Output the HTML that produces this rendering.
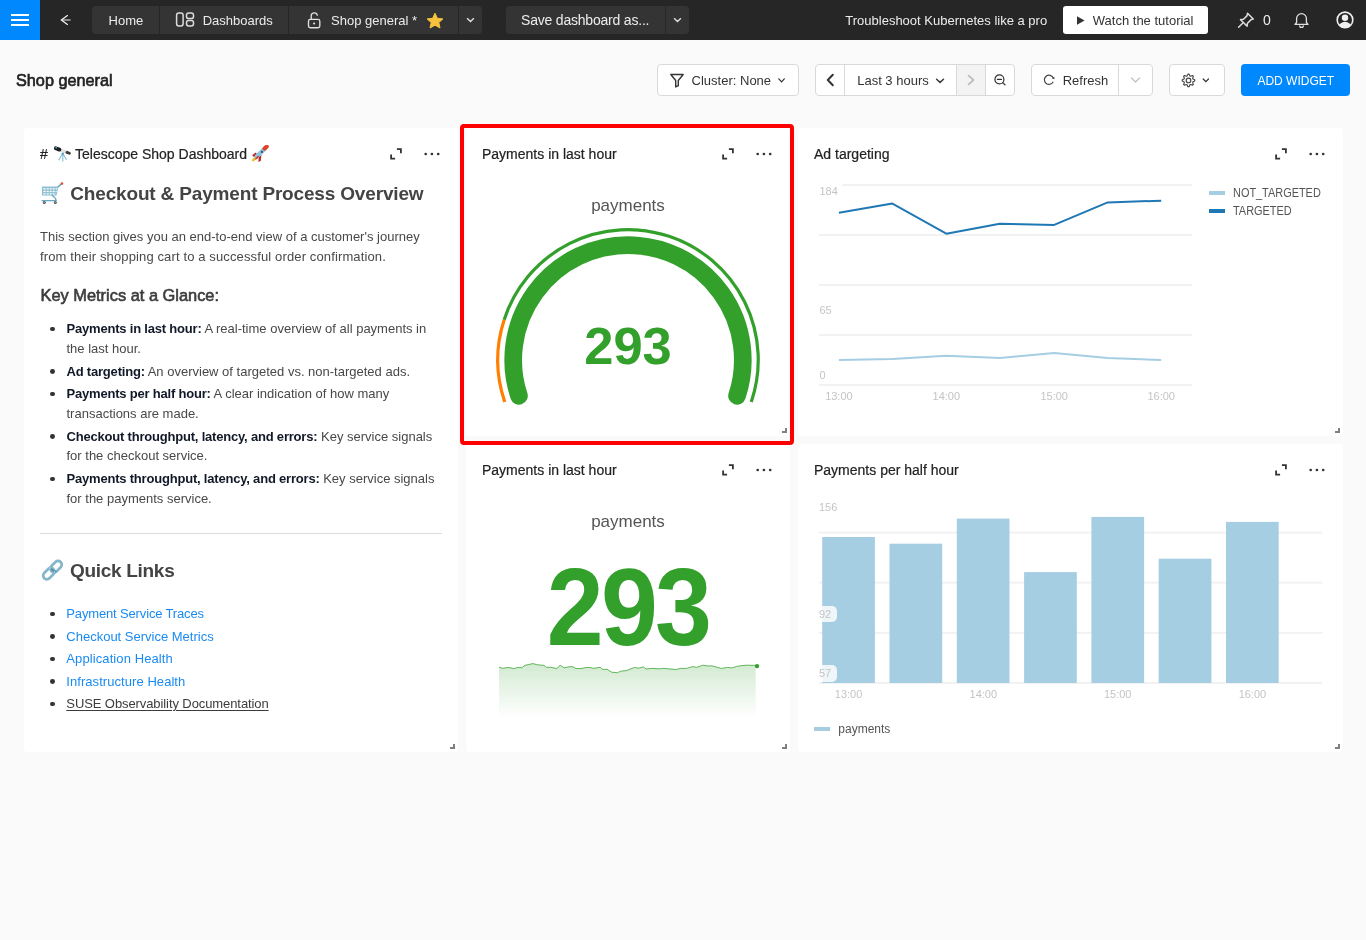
<!DOCTYPE html>
<html><head><meta charset="utf-8"><title>Shop general</title>
<style>
html,body{margin:0;padding:0;}
body{width:1366px;height:940px;overflow:hidden;background:#fafafa;position:relative;font-family:"Liberation Sans", sans-serif;}
.t{position:absolute;white-space:nowrap;}
.b{position:absolute;}
#root{position:absolute;left:0;top:0;width:1366px;height:940px;will-change:transform;}
b{font-weight:700;}
</style></head><body>
<div id="root">
<div class="b" style="left:0px;top:0px;width:1366px;height:40px;background:#262626;"></div>
<div class="b" style="left:0px;top:0px;width:40px;height:40px;background:#0088ff;"></div>
<div class="b" style="left:11px;top:14px;width:18px;height:2px;background:#fff;"></div>
<div class="b" style="left:11px;top:19px;width:18px;height:2px;background:#fff;"></div>
<div class="b" style="left:11px;top:24px;width:18px;height:2px;background:#fff;"></div>
<svg class="b" style="left:58px;top:12px" width="16" height="16" viewBox="0 0 16 16"><path d="M4 8H12.6" stroke="#aaaaaa" stroke-width="1.5"/><path d="M9.4 3.6L3.4 8L9.4 12.4" fill="none" stroke="#f0f0f0" stroke-width="1.3" stroke-linecap="round" stroke-linejoin="miter"/></svg>
<div class="b" style="left:92px;top:6px;width:390px;height:28px;background:#343434;border-radius:4px;"></div>
<div class="b" style="left:159px;top:6px;width:1px;height:28px;background:#262626;"></div>
<div class="b" style="left:288px;top:6px;width:1px;height:28px;background:#262626;"></div>
<div class="b" style="left:458px;top:6px;width:1px;height:28px;background:#262626;"></div>
<div class="t" style="left:108.6px;top:14.00px;font-size:13px;line-height:13px;color:#ececec;font-weight:400;">Home</div>
<svg class="b" style="left:175px;top:12px" width="20" height="15" viewBox="0 0 20 15"><rect x="1.6" y="1" width="6.5" height="13" rx="2.2" fill="none" stroke="#dcdcdc" stroke-width="1.5"/><rect x="11.5" y="1" width="7" height="5.6" rx="2.2" fill="none" stroke="#dcdcdc" stroke-width="1.5"/><rect x="11.5" y="8.4" width="7" height="5.6" rx="2.2" fill="none" stroke="#dcdcdc" stroke-width="1.5"/></svg>
<div class="t" style="left:202.7px;top:14.00px;font-size:13px;line-height:13px;color:#ececec;font-weight:400;">Dashboards</div>
<svg class="b" style="left:305px;top:11px" width="17" height="18" viewBox="0 0 17 18"><path d="M6.2 8.4V5.1a3.1 3.1 0 0 1 6.1-0.9" fill="none" stroke="#e0e0e0" stroke-width="1.35" stroke-linecap="round"/><rect x="3.5" y="8.4" width="11.3" height="8.3" rx="1.8" fill="none" stroke="#e0e0e0" stroke-width="1.35"/><circle cx="9.1" cy="12.5" r="1.1" fill="#e0e0e0"/></svg>
<div class="t" style="left:331px;top:14.00px;font-size:13px;line-height:13px;color:#ececec;font-weight:400;">Shop general *</div>
<svg class="b" style="left:426px;top:12px" width="18" height="17" viewBox="0 0 18 17"><path d="M9 1.2l2.4 5.1 5.5.6-4.1 3.7 1.2 5.4L9 13.2 4 16l1.2-5.4L1.1 6.9l5.5-.6z" fill="#f7c23e" stroke="#f7c23e" stroke-width="1" stroke-linejoin="round"/></svg>
<svg class="b" style="left:465px;top:16px" width="11" height="8" viewBox="0 0 11 8"><path d="M2.4 2.6L5.5 5.6L8.6 2.6" fill="none" stroke="#e0e0e0" stroke-width="1.35" stroke-linecap="round"/></svg>
<div class="b" style="left:506px;top:6px;width:183px;height:28px;background:#343434;border-radius:4px;"></div>
<div class="b" style="left:665px;top:6px;width:1px;height:28px;background:#262626;"></div>
<div class="t" style="left:521px;top:13.35px;font-size:14px;line-height:14px;color:#ececec;font-weight:400;letter-spacing:-0.2px;">Save dashboard as...</div>
<svg class="b" style="left:672px;top:16px" width="11" height="8" viewBox="0 0 11 8"><path d="M2.4 2.6L5.5 5.6L8.6 2.6" fill="none" stroke="#e0e0e0" stroke-width="1.35" stroke-linecap="round"/></svg>
<div class="t" style="left:845.3px;top:14.00px;font-size:13px;line-height:13px;color:#ececec;font-weight:400;">Troubleshoot Kubernetes like a pro</div>
<div class="b" style="left:1063px;top:6px;width:145px;height:28px;background:#fff;border-radius:3px;"></div>
<svg class="b" style="left:1075px;top:15px" width="11" height="11" viewBox="0 0 11 11"><path d="M2 1.2L9.6 5.5L2 9.8z" fill="#333"/></svg>
<div class="t" style="left:1092.8px;top:14.00px;font-size:13px;line-height:13px;color:#333;font-weight:400;">Watch the tutorial</div>
<svg class="b" style="left:1236px;top:11px" width="20" height="18" viewBox="0 0 20 18"><path d="M11.5 2.2l5.8 5.8-2.2.6-3.6 3.6-.4 3-6.6-6.6 3-.4 3.6-3.6z" fill="none" stroke="#dcdcdc" stroke-width="1.5" stroke-linejoin="round"/><path d="M6.6 12.2L2.6 16.2" stroke="#dcdcdc" stroke-width="1.5" stroke-linecap="round"/></svg>
<div class="t" style="left:1263px;top:13.15px;font-size:14px;line-height:14px;color:#ececec;font-weight:400;">0</div>
<svg class="b" style="left:1293px;top:11px" width="17" height="18" viewBox="0 0 17 18"><path d="M2 13.4h13l-1.6-1.9V7.6a4.9 4.9 0 0 0-9.8 0v3.9z" fill="none" stroke="#e0e0e0" stroke-width="1.3" stroke-linejoin="round"/><path d="M6.6 14.4a1.9 1.9 0 0 0 3.8 0" fill="none" stroke="#e0e0e0" stroke-width="1.3"/></svg>
<svg class="b" style="left:1335px;top:11px" width="20" height="20" viewBox="0 0 20 20"><defs><clipPath id="uc"><circle cx="10" cy="8.9" r="7.6"/></clipPath></defs><circle cx="10" cy="8.9" r="7.8" fill="none" stroke="#f0f0f0" stroke-width="1.6"/><circle cx="10" cy="6.7" r="3.2" fill="#f0f0f0"/><ellipse cx="10" cy="16.2" rx="6.4" ry="5.4" fill="#f0f0f0" clip-path="url(#uc)"/></svg>
<div class="t" style="left:16px;top:71.61px;font-size:17px;line-height:17px;color:#222;font-weight:400;-webkit-text-stroke:0.65px #222;transform:scaleX(0.955);transform-origin:0 0;">Shop general</div>
<div class="b" style="left:657px;top:64px;width:142px;height:32px;background:#fff;border:1px solid #d9d9d9;border-radius:4px;box-sizing:border-box;"></div>
<svg class="b" style="left:669px;top:73px" width="16" height="15" viewBox="0 0 16 15"><path d="M1.8 1.5h12.4L9.3 7.5v5.2L6.7 13.9V7.5z" fill="none" stroke="#333" stroke-width="1.4" stroke-linejoin="round"/></svg>
<div class="t" style="left:691.6px;top:74.20px;font-size:13px;line-height:13px;color:#333;font-weight:400;">Cluster: None</div>
<svg class="b" style="left:777px;top:76px" width="10" height="8" viewBox="0 0 10 8"><path d="M1.8 2.8L4.55 5.8L7.3 2.8" fill="none" stroke="#333" stroke-width="1.2" stroke-linecap="round"/></svg>
<div class="b" style="left:815px;top:64px;width:200px;height:32px;background:#fff;border:1px solid #d9d9d9;border-radius:4px;box-sizing:border-box;"></div>
<div class="b" style="left:956px;top:65px;width:29px;height:30px;background:#f3f3f3;"></div>
<div class="b" style="left:844px;top:64px;width:1px;height:32px;background:#d9d9d9;"></div>
<div class="b" style="left:956px;top:64px;width:1px;height:32px;background:#d9d9d9;"></div>
<div class="b" style="left:985px;top:64px;width:1px;height:32px;background:#d9d9d9;"></div>
<svg class="b" style="left:824px;top:73px" width="12" height="14" viewBox="0 0 12 14"><path d="M8.8 1.8L3.8 7L8.8 12.2" fill="none" stroke="#333" stroke-width="2" stroke-linecap="round" stroke-linejoin="round"/></svg>
<div class="t" style="left:857.2px;top:74.20px;font-size:13px;line-height:13px;color:#333;font-weight:400;">Last 3 hours</div>
<svg class="b" style="left:935px;top:76px" width="10" height="8" viewBox="0 0 10 8"><path d="M1.6 3.2L5.05 6.4L8.5 3.2" fill="none" stroke="#3a3a3a" stroke-width="1.5" stroke-linecap="round"/></svg>
<svg class="b" style="left:965px;top:73px" width="12" height="14" viewBox="0 0 12 14"><path d="M3.6 2.6L8.4 7L3.6 11.4" fill="none" stroke="#bdbdbd" stroke-width="1.8" stroke-linecap="round" stroke-linejoin="round"/></svg>
<svg class="b" style="left:992px;top:73px" width="15" height="15" viewBox="0 0 15 15"><circle cx="7.4" cy="6.4" r="4.5" fill="none" stroke="#333" stroke-width="1.2"/><path d="M5.4 6.4h4.1M10.6 9.6l2.4 2.2" stroke="#333" stroke-width="1.2" stroke-linecap="round"/></svg>
<div class="b" style="left:1031px;top:64px;width:122px;height:32px;background:#fff;border:1px solid #d9d9d9;border-radius:4px;box-sizing:border-box;"></div>
<div class="b" style="left:1118px;top:64px;width:1px;height:32px;background:#d9d9d9;"></div>
<svg class="b" style="left:1042px;top:74px" width="14" height="13" viewBox="0 0 14 13"><path d="M11.17 3.86A4.6 4.6 0 1 0 11.17 7.74" fill="none" stroke="#444" stroke-width="1.2"/><path d="M12.3 2.4L12.4 5.2 9.9 4.6z" fill="#444"/></svg>
<div class="t" style="left:1062.7px;top:74.20px;font-size:13px;line-height:13px;color:#333;font-weight:400;">Refresh</div>
<svg class="b" style="left:1130px;top:76px" width="11" height="8" viewBox="0 0 11 8"><path d="M1.5 2L5.5 6L9.5 2" fill="none" stroke="#c4c4c4" stroke-width="1.3" stroke-linecap="round"/></svg>
<div class="b" style="left:1169px;top:64px;width:56px;height:32px;background:#fff;border:1px solid #d9d9d9;border-radius:4px;box-sizing:border-box;"></div>
<svg class="b" style="left:1181px;top:73px" width="15" height="15" viewBox="0 0 15 15"><path d="M6.14 2.90 L6.88 1.13 L8.12 1.13 L8.86 2.90 L9.72 3.25 L11.50 2.53 L12.37 3.40 L11.65 5.18 L12.00 6.04 L13.77 6.78 L13.77 8.02 L12.00 8.76 L11.65 9.62 L12.37 11.40 L11.50 12.27 L9.72 11.55 L8.86 11.90 L8.12 13.67 L6.88 13.67 L6.14 11.90 L5.28 11.55 L3.50 12.27 L2.63 11.40 L3.35 9.62 L3.00 8.76 L1.23 8.02 L1.23 6.78 L3.00 6.04 L3.35 5.18 L2.63 3.40 L3.50 2.53 L5.28 3.25Z" fill="none" stroke="#444" stroke-width="1.15" stroke-linejoin="round"/><circle cx="7.5" cy="7.4" r="2.3" fill="none" stroke="#444" stroke-width="1.15"/></svg>
<svg class="b" style="left:1201px;top:76px" width="10" height="8" viewBox="0 0 10 8"><path d="M2.2 3L4.85 5.7L7.5 3" fill="none" stroke="#333" stroke-width="1.2" stroke-linecap="round"/></svg>
<div class="b" style="left:1241px;top:64px;width:109px;height:32px;background:#0088ff;border-radius:4px;"></div>
<div class="t" style="left:1257.4px;top:74.84px;font-size:12px;line-height:12px;color:#fff;font-weight:400;">ADD WIDGET</div>
<div class="b" style="left:24px;top:128px;width:434px;height:624px;background:#fff;border-radius:4px;"></div>
<svg class="b" style="left:450px;top:744px" width="5" height="5" viewBox="0 0 5 5"><path d="M4 0V4H0" fill="none" stroke="#808080" stroke-width="2"/></svg>
<svg class="b" style="left:390px;top:147px" width="13" height="14" viewBox="0 0 13 14"><path d="M6.9 2.2h4v4" fill="none" stroke="#333" stroke-width="1.8"/><path d="M1.1 7.6v4h4" fill="none" stroke="#333" stroke-width="1.8"/></svg>
<svg class="b" style="left:418px;top:150.9px" width="40" height="6" viewBox="0 0 40 6"><circle cx="7.7" cy="3" r="1.35" fill="#333"/><circle cx="13.9" cy="3" r="1.35" fill="#333"/><circle cx="20.2" cy="3" r="1.35" fill="#333"/></svg>
<div class="b" style="left:466px;top:128px;width:324px;height:308px;background:#fff;border-radius:4px;"></div>
<svg class="b" style="left:782px;top:428px" width="5" height="5" viewBox="0 0 5 5"><path d="M4 0V4H0" fill="none" stroke="#808080" stroke-width="2"/></svg>
<svg class="b" style="left:722px;top:147px" width="13" height="14" viewBox="0 0 13 14"><path d="M6.9 2.2h4v4" fill="none" stroke="#333" stroke-width="1.8"/><path d="M1.1 7.6v4h4" fill="none" stroke="#333" stroke-width="1.8"/></svg>
<svg class="b" style="left:750px;top:150.9px" width="40" height="6" viewBox="0 0 40 6"><circle cx="7.7" cy="3" r="1.35" fill="#333"/><circle cx="13.9" cy="3" r="1.35" fill="#333"/><circle cx="20.2" cy="3" r="1.35" fill="#333"/></svg>
<div class="b" style="left:798px;top:128px;width:545px;height:308px;background:#fff;border-radius:4px;"></div>
<svg class="b" style="left:1335px;top:428px" width="5" height="5" viewBox="0 0 5 5"><path d="M4 0V4H0" fill="none" stroke="#808080" stroke-width="2"/></svg>
<svg class="b" style="left:1275px;top:147px" width="13" height="14" viewBox="0 0 13 14"><path d="M6.9 2.2h4v4" fill="none" stroke="#333" stroke-width="1.8"/><path d="M1.1 7.6v4h4" fill="none" stroke="#333" stroke-width="1.8"/></svg>
<svg class="b" style="left:1303px;top:150.9px" width="40" height="6" viewBox="0 0 40 6"><circle cx="7.7" cy="3" r="1.35" fill="#333"/><circle cx="13.9" cy="3" r="1.35" fill="#333"/><circle cx="20.2" cy="3" r="1.35" fill="#333"/></svg>
<div class="b" style="left:466px;top:444px;width:324px;height:308px;background:#fff;border-radius:4px;"></div>
<svg class="b" style="left:782px;top:744px" width="5" height="5" viewBox="0 0 5 5"><path d="M4 0V4H0" fill="none" stroke="#808080" stroke-width="2"/></svg>
<svg class="b" style="left:722px;top:463px" width="13" height="14" viewBox="0 0 13 14"><path d="M6.9 2.2h4v4" fill="none" stroke="#333" stroke-width="1.8"/><path d="M1.1 7.6v4h4" fill="none" stroke="#333" stroke-width="1.8"/></svg>
<svg class="b" style="left:750px;top:466.9px" width="40" height="6" viewBox="0 0 40 6"><circle cx="7.7" cy="3" r="1.35" fill="#333"/><circle cx="13.9" cy="3" r="1.35" fill="#333"/><circle cx="20.2" cy="3" r="1.35" fill="#333"/></svg>
<div class="b" style="left:798px;top:444px;width:545px;height:308px;background:#fff;border-radius:4px;"></div>
<svg class="b" style="left:1335px;top:744px" width="5" height="5" viewBox="0 0 5 5"><path d="M4 0V4H0" fill="none" stroke="#808080" stroke-width="2"/></svg>
<svg class="b" style="left:1275px;top:463px" width="13" height="14" viewBox="0 0 13 14"><path d="M6.9 2.2h4v4" fill="none" stroke="#333" stroke-width="1.8"/><path d="M1.1 7.6v4h4" fill="none" stroke="#333" stroke-width="1.8"/></svg>
<svg class="b" style="left:1303px;top:466.9px" width="40" height="6" viewBox="0 0 40 6"><circle cx="7.7" cy="3" r="1.35" fill="#333"/><circle cx="13.9" cy="3" r="1.35" fill="#333"/><circle cx="20.2" cy="3" r="1.35" fill="#333"/></svg>
<div class="t" style="left:40px;top:147.15px;font-size:14px;line-height:14px;color:#222;font-weight:400;-webkit-text-stroke:0.2px #222;">#</div>
<div class="t" style="left:75px;top:147.15px;font-size:14px;line-height:14px;color:#222;font-weight:400;-webkit-text-stroke:0.2px #222;">Telescope Shop Dashboard</div>
<div class="t" style="left:482px;top:147.15px;font-size:14px;line-height:14px;color:#222;font-weight:400;-webkit-text-stroke:0.2px #222;">Payments in last hour</div>
<div class="t" style="left:814px;top:147.15px;font-size:14px;line-height:14px;color:#222;font-weight:400;-webkit-text-stroke:0.2px #222;">Ad targeting</div>
<div class="t" style="left:482px;top:463.15px;font-size:14px;line-height:14px;color:#222;font-weight:400;-webkit-text-stroke:0.2px #222;">Payments in last hour</div>
<div class="t" style="left:814px;top:463.15px;font-size:14px;line-height:14px;color:#222;font-weight:400;-webkit-text-stroke:0.2px #222;">Payments per half hour</div>
<svg class="b" style="left:54px;top:145px" width="17" height="18" viewBox="0 0 17 18"><path d="M5.2 4.5L13 7.4" stroke="#e2e2e2" stroke-width="3.3" stroke-linecap="round"/><path d="M1.8 3.3L5.4 4.6" stroke="#1e1e1e" stroke-width="3.8" stroke-linecap="round"/><path d="M13 7.4L15.4 8.3" stroke="#3a3a3a" stroke-width="2.8" stroke-linecap="round"/><circle cx="2.2" cy="2.7" r="0.9" fill="#4aa8d8"/><path d="M8.8 8.2L4.6 15.3M8.8 8.2V16.6M8.8 8.2L12.5 14.8" stroke="#86bfd8" stroke-width="1.1" fill="none"/><circle cx="8.8" cy="8.6" r="1.2" fill="#5d9fbd"/></svg>
<svg class="b" style="left:251px;top:145px" width="18" height="18" viewBox="0 0 18 18"><path d="M1.2 10.3L4.6 7.5 6.8 9.8 3.2 12.2z" fill="#c81e1e"/><path d="M7.8 11.6L10.4 9.8 9.8 15.8 7.4 17z" fill="#c81e1e"/><path d="M2.2 15.2L5.2 12" stroke="#f5c030" stroke-width="2.6" stroke-linecap="round"/><path d="M5.6 11.6L14.2 3.2" stroke="#8fc3d9" stroke-width="4.4" stroke-linecap="round"/><path d="M13.6 3.6L15.8 1.6" stroke="#e04428" stroke-width="4" stroke-linecap="round"/><circle cx="10.9" cy="6.9" r="1.05" fill="#3a4a5a"/><path d="M4.4 14.4L7.6 11.2" stroke="#d42a1e" stroke-width="1.3"/></svg>
<div class="t" style="left:70.3px;top:184.22px;font-size:19px;line-height:19px;color:#444;font-weight:700;letter-spacing:-0.17px;">Checkout &amp; Payment Process Overview</div>
<svg class="b" style="left:36px;top:176px" width="34" height="34" viewBox="0 0 34 34"><path d="M6 10.6H22.4L20.6 19.6H6z" fill="#8dbfd2"/><g fill="#fff"><rect x="7.4" y="12.2" width="13.6" height="1.3"/><rect x="7.4" y="14.8" width="13.2" height="1.3"/><rect x="7.4" y="17.3" width="12.7" height="1.2"/></g><g stroke="#8dbfd2" stroke-width="1"><path d="M10.2 11v8.4M13.2 11v8.4M16.2 11v8.4M19.2 11v8.4"/></g><path d="M22.4 10.6L26 7.4" stroke="#6aa6bd" stroke-width="1.5" stroke-linecap="round"/><circle cx="26" cy="7.6" r="1.3" fill="#e05a3a"/><path d="M16.2 19.6c1.5 1 3.4 2.2 3.6 3.4v1.6M6 24.6H20.3" fill="none" stroke="#6aa6bd" stroke-width="1.4" stroke-linecap="round"/><circle cx="8.3" cy="26.4" r="1.5" fill="#555"/><circle cx="19.3" cy="26.4" r="1.5" fill="#555"/><circle cx="8.3" cy="26.4" r="0.7" fill="#6aa6bd"/><circle cx="19.3" cy="26.4" r="0.7" fill="#6aa6bd"/></svg>
<div class="t" style="left:40px;top:230.00px;font-size:13px;line-height:13px;color:#484848;font-weight:400;">This section gives you an end-to-end view of a customer&#39;s journey</div>
<div class="t" style="left:40px;top:249.50px;font-size:13px;line-height:13px;color:#484848;font-weight:400;letter-spacing:0.13px;">from their shopping cart to a successful order confirmation.</div>
<div class="t" style="left:40.5px;top:287.12px;font-size:16.4px;line-height:16.4px;color:#3c3c3c;font-weight:400;-webkit-text-stroke:0.6px #3c3c3c;">Key Metrics at a Glance:</div>
<div class="b" style="left:50.2px;top:326.6px;width:4.8px;height:4.8px;border-radius:50%;background:#333"></div>
<div class="t" style="left:66.5px;top:322.00px;font-size:13px;line-height:13px;color:#484848"><b style="color:#111827;letter-spacing:-0.2px">Payments in last hour:</b> A real-time overview of all payments in</div>
<div class="t" style="left:66.5px;top:341.60px;font-size:13px;line-height:13px;color:#484848;font-weight:400;">the last hour.</div>
<div class="b" style="left:50.2px;top:369.1px;width:4.8px;height:4.8px;border-radius:50%;background:#333"></div>
<div class="t" style="left:66.5px;top:364.50px;font-size:13px;line-height:13px;color:#484848"><b style="color:#111827;letter-spacing:-0.2px">Ad targeting:</b> An overview of targeted vs. non-targeted ads.</div>
<div class="b" style="left:50.2px;top:391.6px;width:4.8px;height:4.8px;border-radius:50%;background:#333"></div>
<div class="t" style="left:66.5px;top:387.00px;font-size:13px;line-height:13px;color:#484848"><b style="color:#111827;letter-spacing:-0.2px">Payments per half hour:</b> A clear indication of how many</div>
<div class="t" style="left:66.5px;top:406.60px;font-size:13px;line-height:13px;color:#484848;font-weight:400;">transactions are made.</div>
<div class="b" style="left:50.2px;top:434.4px;width:4.8px;height:4.8px;border-radius:50%;background:#333"></div>
<div class="t" style="left:66.5px;top:429.80px;font-size:13px;line-height:13px;color:#484848"><b style="color:#111827;letter-spacing:-0.2px">Checkout throughput, latency, and errors:</b> Key service signals</div>
<div class="t" style="left:66.5px;top:449.40px;font-size:13px;line-height:13px;color:#484848;font-weight:400;">for the checkout service.</div>
<div class="b" style="left:50.2px;top:476.6px;width:4.8px;height:4.8px;border-radius:50%;background:#333"></div>
<div class="t" style="left:66.5px;top:472.00px;font-size:13px;line-height:13px;color:#484848"><b style="color:#111827;letter-spacing:-0.2px">Payments throughput, latency, and errors:</b> Key service signals</div>
<div class="t" style="left:66.5px;top:491.60px;font-size:13px;line-height:13px;color:#484848;font-weight:400;">for the payments service.</div>
<div class="b" style="left:40px;top:533px;width:402px;height:1px;background:#dcdcdc;"></div>
<svg class="b" style="left:36px;top:553px" width="34" height="34" viewBox="0 0 34 34"><g fill="none" stroke="#86b6c9" stroke-width="2.7"><rect x="6.3" y="16.9" width="13" height="7.4" rx="3.7" transform="rotate(-45 12.8 20.6)"/><rect x="13.6" y="9.9" width="13" height="7.4" rx="3.7" transform="rotate(-45 20.1 13.6)"/></g><path d="M15.2 15.6l2.4 2.6M18.6 17.4l1.6 1.8" stroke="#3f8199" stroke-width="1.4"/><path d="M13.3 13.7l0.8 2.6M18.5 19.7l0.5-2.2" stroke="#a8d8f0" stroke-width="0.9"/></svg>
<div class="t" style="left:70px;top:560.92px;font-size:19px;line-height:19px;color:#444;font-weight:700;letter-spacing:-0.3px;">Quick Links</div>
<div class="b" style="left:50.2px;top:611.6px;width:4.8px;height:4.8px;border-radius:50%;background:#333"></div>
<div class="t" style="left:66.3px;top:607.00px;font-size:13px;line-height:13px;color:#1a8af0;font-weight:400;letter-spacing:-0.15px;">Payment Service Traces</div>
<div class="b" style="left:50.2px;top:634.1px;width:4.8px;height:4.8px;border-radius:50%;background:#333"></div>
<div class="t" style="left:66.3px;top:629.50px;font-size:13px;line-height:13px;color:#1a8af0;font-weight:400;letter-spacing:0px;">Checkout Service Metrics</div>
<div class="b" style="left:50.2px;top:656.6px;width:4.8px;height:4.8px;border-radius:50%;background:#333"></div>
<div class="t" style="left:66.3px;top:652.00px;font-size:13px;line-height:13px;color:#1a8af0;font-weight:400;letter-spacing:0.1px;">Application Health</div>
<div class="b" style="left:50.2px;top:679.1px;width:4.8px;height:4.8px;border-radius:50%;background:#333"></div>
<div class="t" style="left:66.3px;top:674.50px;font-size:13px;line-height:13px;color:#1a8af0;font-weight:400;letter-spacing:0.06px;">Infrastructure Health</div>
<div class="b" style="left:50.2px;top:701.6px;width:4.8px;height:4.8px;border-radius:50%;background:#333"></div>
<div class="t" style="left:66.3px;top:697.00px;font-size:13px;line-height:13px;color:#3c3c3c;font-weight:400;letter-spacing:-0.09px;text-decoration:underline;text-underline-offset:2px;">SUSE Observability Documentation</div>
<svg class="b" style="left:0;top:0" width="1366" height="940"><path d="M518.94 395.86A114.8 114.8 0 1 1 737.06 395.86" fill="none" stroke="#33a02c" stroke-width="17.7" stroke-linecap="round"/><path d="M504.75 401.96A130.2 130.2 0 0 1 504.17 319.77" fill="none" stroke="#ff7f00" stroke-width="3.2"/><path d="M504.17 319.77A130.2 130.2 0 1 1 751.25 401.96" fill="none" stroke="#33a02c" stroke-width="3.2"/></svg>
<div class="t" style="left:466px;top:197.21px;font-size:17px;line-height:17px;color:#555;font-weight:400;width:324px;text-align:center;">payments</div>
<div class="t" style="left:466px;top:319.86px;font-size:52.5px;line-height:52.5px;color:#33a02c;font-weight:700;width:324px;text-align:center;">293</div>
<div class="t" style="left:466px;top:513.01px;font-size:17px;line-height:17px;color:#555;font-weight:400;width:324px;text-align:center;">payments</div>
<div class="t" style="left:466px;top:552.18px;font-size:110px;line-height:110px;color:#33a02c;font-weight:700;width:324px;text-align:center;letter-spacing:-3px;transform:scaleX(0.93);transform-origin:162px 0;">293</div>
<svg class="b" style="left:0;top:0" width="1366" height="940"><defs><linearGradient id="sg" x1="0" y1="0" x2="0" y2="1"><stop offset="0" stop-color="#33a02c" stop-opacity="0.22"/><stop offset="1" stop-color="#33a02c" stop-opacity="0"/></linearGradient></defs><path d="M499.0 667.3 L502.9 668.3 L506.9 667.6 L509.8 667.6 L513.8 668.6 L518.2 667.3 L521.7 667.8 L525.1 665.3 L529.6 664.3 L533.0 663.6 L536.5 664.6 L540.5 665.1 L543.9 665.3 L546.4 667.3 L550.3 667.3 L556.8 668.5 L560.2 665.3 L564.2 667.8 L568.1 667.0 L572.1 666.5 L576.0 668.5 L581.0 668.6 L585.9 667.5 L589.9 667.5 L593.8 668.3 L600.2 667.3 L602.7 669.3 L607.2 669.3 L611.6 672.2 L617.5 672.7 L620.5 671.2 L624.4 670.8 L625.0 671.0 L629.1 669.5 L634.7 667.4 L638.3 668.2 L643.4 666.9 L646.0 669.0 L651.6 668.4 L658.8 668.8 L663.9 668.4 L670.1 669.0 L676.2 669.5 L680.3 668.4 L686.5 668.4 L689.6 667.4 L693.2 666.6 L696.7 667.4 L702.9 665.2 L707.0 665.9 L712.1 665.9 L721.3 668.4 L727.5 667.4 L732.1 667.9 L736.7 666.4 L741.8 665.6 L747.0 665.2 L755.7 665.4 L755.7 717 L499.0 717 Z" fill="url(#sg)"/><path d="M499.0 667.3 L502.9 668.3 L506.9 667.6 L509.8 667.6 L513.8 668.6 L518.2 667.3 L521.7 667.8 L525.1 665.3 L529.6 664.3 L533.0 663.6 L536.5 664.6 L540.5 665.1 L543.9 665.3 L546.4 667.3 L550.3 667.3 L556.8 668.5 L560.2 665.3 L564.2 667.8 L568.1 667.0 L572.1 666.5 L576.0 668.5 L581.0 668.6 L585.9 667.5 L589.9 667.5 L593.8 668.3 L600.2 667.3 L602.7 669.3 L607.2 669.3 L611.6 672.2 L617.5 672.7 L620.5 671.2 L624.4 670.8 L625.0 671.0 L629.1 669.5 L634.7 667.4 L638.3 668.2 L643.4 666.9 L646.0 669.0 L651.6 668.4 L658.8 668.8 L663.9 668.4 L670.1 669.0 L676.2 669.5 L680.3 668.4 L686.5 668.4 L689.6 667.4 L693.2 666.6 L696.7 667.4 L702.9 665.2 L707.0 665.9 L712.1 665.9 L721.3 668.4 L727.5 667.4 L732.1 667.9 L736.7 666.4 L741.8 665.6 L747.0 665.2 L755.7 665.4" fill="none" stroke="#33a02c" stroke-opacity="0.75" stroke-width="1"/><circle cx="757.0" cy="666.1" r="2.2" fill="#33a02c"/></svg>
<svg class="b" style="left:0;top:0" width="1366" height="940"><rect x="819" y="184" width="373" height="2" fill="#f2f2f2"/><rect x="819" y="234" width="373" height="2" fill="#f2f2f2"/><rect x="819" y="284" width="373" height="2" fill="#f2f2f2"/><rect x="819" y="334" width="373" height="2" fill="#f2f2f2"/><rect x="819" y="384" width="373" height="2" fill="#f2f2f2"/><path d="M838.9 360 L892.4 359.1 L946.3 355.8 L999.8 357.9 L1054.2 352.9 L1107.7 357.9 L1161.2 360" fill="none" stroke="#a6cee3" stroke-width="2" stroke-linejoin="round"/><path d="M838.9 212.8 L892.4 203.6 L946.3 233.7 L999.8 223.7 L1054.2 224.9 L1107.7 202.4 L1161.2 200.7" fill="none" stroke="#1f78b4" stroke-width="2" stroke-linejoin="round"/><rect x="1209" y="191" width="16" height="4" fill="#a6cee3"/><rect x="1209" y="209" width="16" height="4" fill="#1f78b4"/></svg>
<div class="b" style="left:818px;top:183px;width:24px;height:14px;background:#fff;"></div>
<div class="t" style="left:819.5px;top:185.89px;font-size:11px;line-height:11px;color:#c4c4c4;font-weight:400;">184</div>
<div class="t" style="left:819.5px;top:304.89px;font-size:11px;line-height:11px;color:#c4c4c4;font-weight:400;">65</div>
<div class="t" style="left:819.5px;top:369.99px;font-size:11px;line-height:11px;color:#c4c4c4;font-weight:400;">0</div>
<div class="t" style="left:808.9px;top:391.19px;font-size:11px;line-height:11px;color:#c4c4c4;font-weight:400;width:60px;text-align:center;">13:00</div>
<div class="t" style="left:916.3px;top:391.19px;font-size:11px;line-height:11px;color:#c4c4c4;font-weight:400;width:60px;text-align:center;">14:00</div>
<div class="t" style="left:1024.2px;top:391.19px;font-size:11px;line-height:11px;color:#c4c4c4;font-weight:400;width:60px;text-align:center;">15:00</div>
<div class="t" style="left:1131.2px;top:391.19px;font-size:11px;line-height:11px;color:#c4c4c4;font-weight:400;width:60px;text-align:center;">16:00</div>
<div class="t" style="left:1233.4px;top:186.84px;font-size:12px;line-height:12px;color:#555;font-weight:400;transform:scaleX(0.91);transform-origin:0 0;">NOT_TARGETED</div>
<div class="t" style="left:1233.4px;top:204.84px;font-size:12px;line-height:12px;color:#555;font-weight:400;transform:scaleX(0.91);transform-origin:0 0;">TARGETED</div>
<svg class="b" style="left:0;top:0" width="1366" height="940"><rect x="819" y="531.6" width="503" height="2" fill="#f2f2f2"/><rect x="819" y="581.6" width="503" height="2" fill="#f2f2f2"/><rect x="819" y="631.9" width="503" height="2" fill="#f2f2f2"/><rect x="819" y="682.0" width="503" height="2" fill="#f2f2f2"/><rect x="822.2" y="537" width="52.7" height="146.0" fill="#a6cee3"/><rect x="889.5" y="543.7" width="52.7" height="139.3" fill="#a6cee3"/><rect x="956.8" y="518.6" width="52.7" height="164.4" fill="#a6cee3"/><rect x="1024.1" y="572.1" width="52.7" height="110.9" fill="#a6cee3"/><rect x="1091.4" y="516.9" width="52.7" height="166.1" fill="#a6cee3"/><rect x="1158.7" y="558.7" width="52.7" height="124.3" fill="#a6cee3"/><rect x="1226" y="521.9" width="52.7" height="161.1" fill="#a6cee3"/><rect x="814" y="727" width="16" height="4" fill="#a6cee3"/></svg>
<div class="b" style="left:818.8px;top:606px;width:18.2px;height:16px;background:rgba(255,255,255,0.82);border-radius:0 5px 5px 0;"></div>
<div class="b" style="left:818.8px;top:665px;width:18.2px;height:16.5px;background:rgba(255,255,255,0.82);border-radius:0 5px 5px 0;"></div>
<div class="t" style="left:819px;top:501.69px;font-size:11px;line-height:11px;color:#c4c4c4;font-weight:400;">156</div>
<div class="t" style="left:819px;top:608.69px;font-size:11px;line-height:11px;color:#c4c4c4;font-weight:400;">92</div>
<div class="t" style="left:819px;top:668.19px;font-size:11px;line-height:11px;color:#c4c4c4;font-weight:400;">57</div>
<div class="t" style="left:818.6px;top:688.69px;font-size:11px;line-height:11px;color:#c4c4c4;font-weight:400;width:60px;text-align:center;">13:00</div>
<div class="t" style="left:953.3px;top:688.69px;font-size:11px;line-height:11px;color:#c4c4c4;font-weight:400;width:60px;text-align:center;">14:00</div>
<div class="t" style="left:1087.7px;top:688.69px;font-size:11px;line-height:11px;color:#c4c4c4;font-weight:400;width:60px;text-align:center;">15:00</div>
<div class="t" style="left:1222.4px;top:688.69px;font-size:11px;line-height:11px;color:#c4c4c4;font-weight:400;width:60px;text-align:center;">16:00</div>
<div class="t" style="left:838.3px;top:723.34px;font-size:12px;line-height:12px;color:#555;font-weight:400;">payments</div>
<div class="b" style="left:460px;top:124px;width:334px;height:321px;border:4px solid #ff0000;border-radius:4px;box-sizing:border-box;"></div>
</div>
</body></html>
